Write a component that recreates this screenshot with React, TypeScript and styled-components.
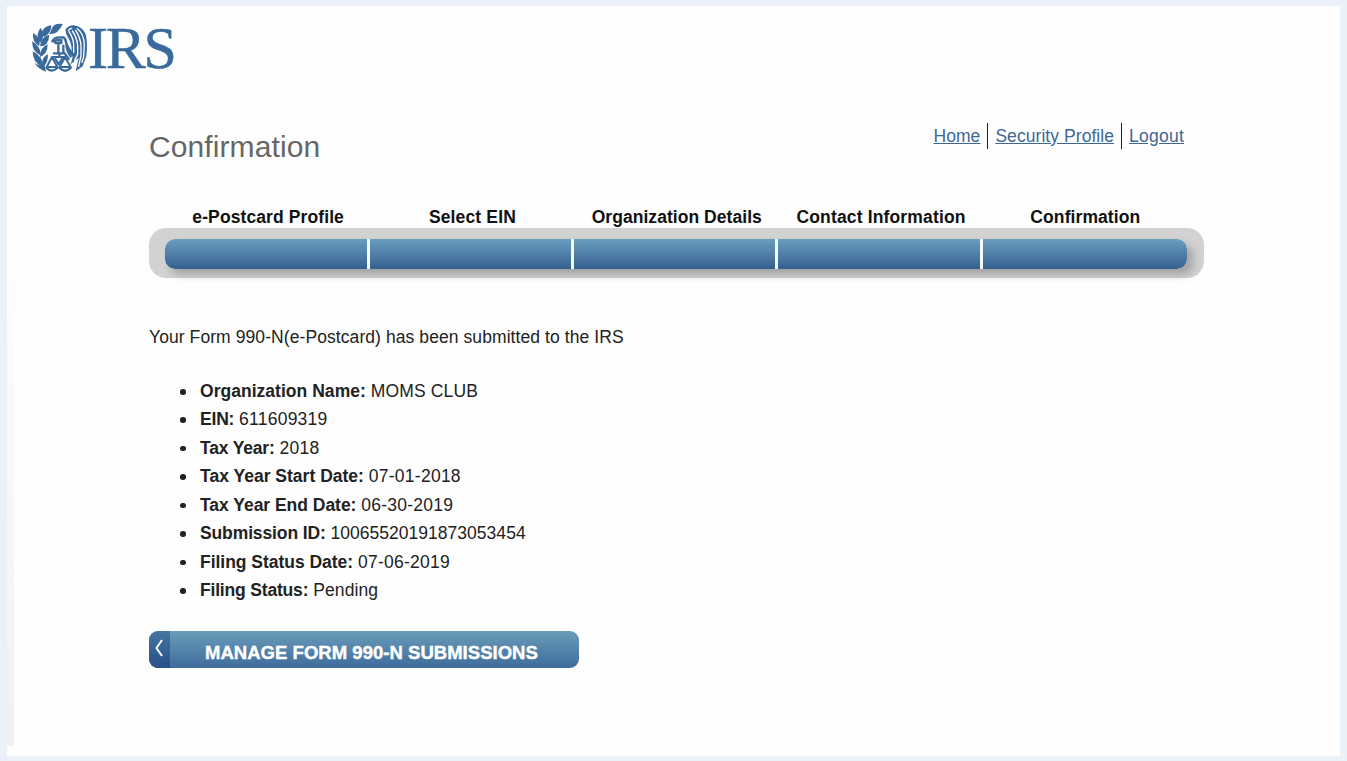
import React from "react";
import styled, { createGlobalStyle } from "styled-components";

const GlobalStyle = createGlobalStyle`
  * { box-sizing: border-box; }
  body {
    margin: 0;
    background: #ebf1f9;
    font-family: "Liberation Sans", Arial, Helvetica, sans-serif;
    color: #222;
  }
`;

const Frame = styled.div`
  height: 761px;
  padding: 6px 7px 5px 7px;
  overflow: hidden;
`;

const Page = styled.main`
  height: 750px;
  background: linear-gradient(rgba(241, 241, 239, 0) 30%, #f1f1ef) 0 0 / 7px 740px no-repeat, #fefefe;
`;

const Brand = styled.header`
  display: flex;
  height: 116px;
  padding: 17px 0 0 25px;
`;

const Seal = styled.svg`
  display: block;
  width: 56px;
  height: 50px;
  flex: none;
`;

const BrandName = styled.span`
  margin-top: -5px;
  font-family: "Liberation Serif", "Times New Roman", serif;
  font-size: 60px;
  line-height: 60px;
  letter-spacing: -2.3px;
  color: #3a6a9c;
  -webkit-text-stroke: 0.5px #3a6a9c;
`;

const Content = styled.div`
  width: 1055px;
  margin-left: 142px;
`;

const TitleRow = styled.div`
  display: flex;
  justify-content: space-between;
  align-items: flex-start;
  height: 85px;
  padding-right: 20px;
`;

const Title = styled.h1`
  margin: 8px 0 0;
  font-size: 30px;
  line-height: 34px;
  font-weight: 400;
  letter-spacing: 0.1px;
  color: #666;
`;

const Nav = styled.nav`
  display: flex;
  padding-top: 1px;
`;

const NavLink = styled.a<{ $track: number }>`
  font-size: 17.5px;
  line-height: 26px;
  letter-spacing: ${(p) => p.$track}px;
  color: #3f6796;
  text-decoration: underline;
  & + & {
    margin-left: 7px;
    padding-left: 7px;
    border-left: 1px solid #222;
  }
`;

const Labels = styled.div`
  display: grid;
  grid-template-columns: repeat(5, 204.3px);
  padding-left: 17px;
  height: 21px;
`;

const Label = styled.div<{ $track: number }>`
  text-align: center;
  font-size: 17.5px;
  line-height: 20px;
  font-weight: 700;
  white-space: nowrap;
  letter-spacing: ${(p) => p.$track}px;
  color: #111;
`;

const Track = styled.div`
  height: 50px;
  padding: 11px 17px 10px 16px;
  border-radius: 17px;
  background: #d2d2d2;
`;

const Bar = styled.div`
  display: grid;
  grid-template-columns: 202px 201px 201px 202px 1fr;
  gap: 3px;
  height: 30px;
  border-radius: 10px;
  background: #f4fbff;
  overflow: hidden;
`;

const BarShadow = styled.div`
  border-radius: 10px;
  box-shadow: 6px 6px 8px rgba(80, 80, 80, 0.35);
`;

const Step = styled.div`
  background: linear-gradient(#6a9ebf, #35608f);
`;

const Message = styled.p`
  margin: 48px 0 0;
  font-size: 17.5px;
  line-height: 22px;
  letter-spacing: 0.08px;
`;

const Details = styled.ul`
  margin: 29px 0 0;
  padding-left: 51px;
  list-style: none;
`;

const Detail = styled.li`
  position: relative;
  height: 28.45px;
  font-size: 17.5px;
  line-height: 28.45px;
  &::before {
    content: "";
    position: absolute;
    left: -20px;
    top: 12px;
    width: 5.5px;
    height: 5.5px;
    border-radius: 50%;
    background: #222;
  }
`;

const DetailLabel = styled.b<{ $track: number }>`
  letter-spacing: ${(p) => p.$track}px;
`;

const DetailValue = styled.span<{ $track: number }>`
  letter-spacing: ${(p) => p.$track}px;
`;

const Button = styled.button`
  display: flex;
  width: 430px;
  height: 37px;
  margin-top: 26px;
  padding: 0;
  border: 0;
  border-radius: 9px;
  overflow: hidden;
  background: linear-gradient(#6a9cb9, #3f6c9c);
  color: #fff;
  font: 700 18.5px/44px "Liberation Sans", Arial, sans-serif;
`;

const ButtonCap = styled.span`
  display: block;
  width: 21px;
  height: 37px;
  background: linear-gradient(#4776a0, #28508a);
`;

const ButtonText = styled.span`
  margin-left: 35px;
  letter-spacing: 0.03px;
  white-space: nowrap;
  -webkit-text-stroke: 0.4px #fff;
`;

const links = [
  { name: "Home", track: 0.05 },
  { name: "Security Profile", track: 0.06 },
  { name: "Logout", track: 0.24 },
];

const steps = [
  { name: "e-Postcard Profile", track: 0.1 },
  { name: "Select EIN", track: 0.14 },
  { name: "Organization Details", track: 0.05 },
  { name: "Contact Information", track: 0.15 },
  { name: "Confirmation", track: 0.09 },
];

const details = [
  { label: "Organization Name:", value: "MOMS CLUB", lt: 0.03, vt: 0.15 },
  { label: "EIN:", value: "611609319", lt: -0.2, vt: 0.24 },
  { label: "Tax Year:", value: "2018", lt: -0.18, vt: 0.24 },
  { label: "Tax Year Start Date:", value: "07-01-2018", lt: 0.01, vt: 0.25 },
  { label: "Tax Year End Date:", value: "06-30-2019", lt: -0.03, vt: 0.25 },
  { label: "Submission ID:", value: "10065520191873053454", lt: -0.12, vt: 0.02 },
  { label: "Filing Status Date:", value: "07-06-2019", lt: -0.03, vt: 0.25 },
  { label: "Filing Status:", value: "Pending", lt: -0.18, vt: 0.1 },
];

function EagleSeal() {
  return (
    <Seal viewBox="96 66 168 150" aria-hidden="true">
      <g fill="#3a6a9c">
        <path d="M188 69Q160 66 155 84Q152 94 147 99Q174 102 188 69Z" />
        <path d="M154 73Q131 76 126 94Q126 102 132 108Q154 98 154 73Z" />
        <path d="M122 80Q104 102 120 126Q138 106 122 80Z" />
        <path d="M99 96Q96 124 118 135Q124 110 99 96Z" />
        <path d="M148 101Q122 108 120 136Q146 136 148 101Z" />
        <path d="M97 121Q95 152 121 163Q124 138 97 121Z" />
        <path d="M143 130Q119 140 120 168Q143 160 143 130Z" />
        <path d="M98 151Q97 184 128 198Q132 168 98 151Z" />
        <path d="M144 160Q126 166 126 192Q114 194 104 186Q116 206 138 212L134 194Q144 182 144 160Z" />
        <path d="M196 86Q204 73 222 73Q246 76 257 100Q264 128 259 166L248 196L227 211L236 170L212 190L218 168Q202 152 199 122Q208 138 215 150Q216 130 205 111Q197 98 196 86Z" />
      </g>
      <g fill="none" stroke="#fefefe" strokeWidth="4" strokeLinecap="round">
        <path d="M206 88Q209 82 215 82M207 92Q220 112 221 130V154" />
        <path d="M217 90Q230 108 233 132V160L224 178" />
        <path d="M227 88Q242 112 243 134V164L236 196" />
        <path d="M232 83Q252 98 253 132L251 166L246 184" />
      </g>
      <g fill="none" stroke="#3a6a9c" strokeWidth="7" strokeLinejoin="round" strokeLinecap="round">
        <path d="M157 120Q163 109 178 109H190Q198 114 199 128Q200 150 212 166" />
        <path d="M159 121L172 117H184V126H166" />
        <path d="M175 126V154M162 157H190M178 158V168" />
        <path d="M190 134V152L206 174" />
        <path d="M156 168L140 198H172ZM195 168L179 198H212ZM156 168H195" strokeWidth="6" />
        <path d="M140 201Q154 217 172 201M179 201Q195 217 212 201" />
        <path d="M166 174L176 190L186 174" />
      </g>
    </Seal>
  );
}

export default function App() {
  return (
    <>
      <GlobalStyle />
      <Frame>
        <Page>
          <Brand>
            <EagleSeal />
            <BrandName>IRS</BrandName>
          </Brand>
          <Content>
            <TitleRow>
              <Title>Confirmation</Title>
              <Nav>
                {links.map((l) => (
                  <NavLink key={l.name} $track={l.track}>{l.name}</NavLink>
                ))}
              </Nav>
            </TitleRow>
            <Labels>
              {steps.map((s) => (
                <Label key={s.name} $track={s.track}>{s.name}</Label>
              ))}
            </Labels>
            <Track>
              <BarShadow>
                <Bar>
                  {steps.map((s) => (
                    <Step key={s.name} />
                  ))}
                </Bar>
              </BarShadow>
            </Track>
            <Message>Your Form 990-N(e-Postcard) has been submitted to the IRS</Message>
            <Details>
              {details.map((d) => (
                <Detail key={d.label}>
                  <DetailLabel $track={d.lt}>{d.label}</DetailLabel>{" "}
                  <DetailValue $track={d.vt}>{d.value}</DetailValue>
                </Detail>
              ))}
            </Details>
            <Button>
              <ButtonCap>
                <svg width="21" height="37" viewBox="0 0 21 37" fill="none" stroke="#fff" strokeWidth="2">
                  <path d="M13 9L7.5 17L13 25" />
                </svg>
              </ButtonCap>
              <ButtonText>MANAGE FORM 990-N SUBMISSIONS</ButtonText>
            </Button>
          </Content>
        </Page>
      </Frame>
    </>
  );
}
